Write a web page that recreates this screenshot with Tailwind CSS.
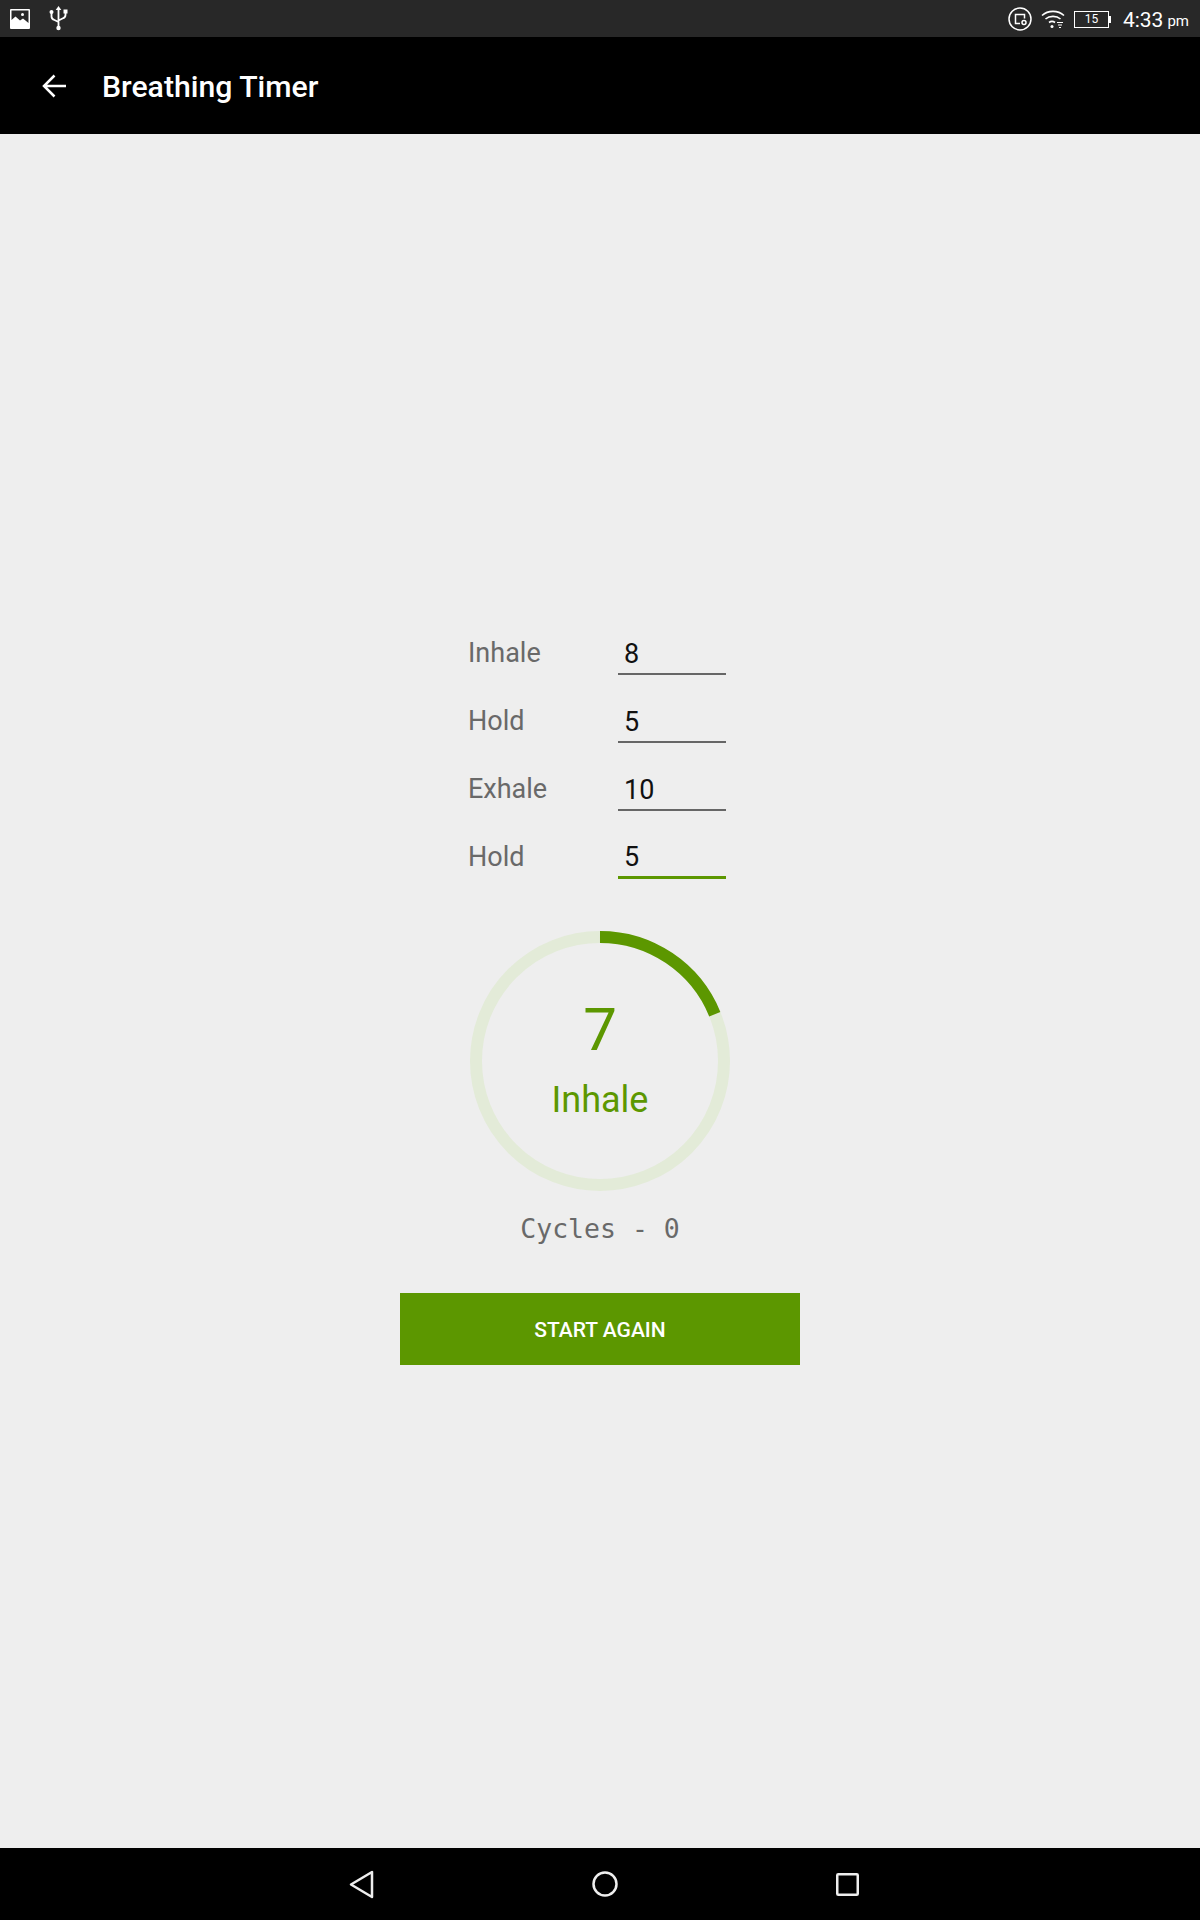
<!DOCTYPE html>
<html lang="en">
<head>
<meta charset="utf-8">
<title>Breathing Timer</title>
<script src="https://cdn.jsdelivr.net/npm/@tailwindcss/browser@4"></script>
</head>
<body class="font-['Roboto',sans-serif]">
<div class="flex flex-col w-[1200px] h-[1920px] bg-[#eeeeee]">

  <!-- Status bar -->
  <div class="flex items-center justify-between h-[37px] bg-[#282828] text-white">
    <div class="flex items-center pl-[10px] gap-[19px]">
      <svg class="w-[20px] h-[20px]" viewBox="0 0 20 20">
        <path fill="#fff" fill-rule="evenodd" d="M1 0h18a1 1 0 0 1 1 1v18a1 1 0 0 1-1 1H1a1 1 0 0 1-1-1V1a1 1 0 0 1 1-1zM1.5 1.5v9.5l4-3.5 4.5 4 3-2 5.500 4.500V1.500z"/>
        <circle cx="12.500" cy="5.500" r="1.500" fill="#fff"/>
      </svg>
      <svg class="w-[19px] h-[25px]" viewBox="0 0 19 25" fill="none" stroke="#fff" stroke-width="1.800">
        <path d="M9.500 2v20M2.500 7v3.500c0 2 1.500 3 3 3.500l4 2M16.500 6v3c0 2-1.500 3-3 3.500l-4 2"/>
        <path fill="#fff" stroke="none" d="M9.500 0l2.800 4H6.700z"/>
        <circle cx="9.500" cy="22" r="2.200" fill="#fff" stroke="none"/>
        <circle cx="2.500" cy="6" r="2" fill="#fff" stroke="none"/>
        <rect x="14.500" y="3.500" width="4" height="4" fill="#fff" stroke="none"/>
      </svg>
    </div>
    <div class="flex items-center pr-[11px]">
      <svg class="w-[24px] h-[24px] mr-[9px]" viewBox="0 0 24 24" fill="none" stroke="#fff">
        <circle cx="12" cy="12" r="11" stroke-width="1.500"/>
        <path stroke-width="1.500" d="M12 16.500H7.500v-9h9v4"/>
        <circle cx="16" cy="15.500" r="2" stroke-width="1.500"/>
      </svg>
      <svg class="w-[24px] h-[20px] mr-[9px]" viewBox="0 0 24 20" fill="none" stroke="#fff" stroke-width="1.600">
        <path d="M1 6.500c6-5.500 16-5.500 22 0"/>
        <path d="M4.500 10c4-3.500 11-3.500 15 0"/>
        <path d="M8 13.500c2-1.500 4-1.500 6 0"/>
        <circle cx="11" cy="17.500" r="1.500" fill="#fff" stroke="none"/>
        <path stroke-width="1.200" d="M16 13.500h6M17 16h4M18 18.500h2"/>
      </svg>
      <div class="flex items-center mt-[1px] mr-[12px]">
        <div class="flex items-center justify-center w-[35px] h-[17px] border border-white text-[12px] leading-none">15</div>
        <div class="w-[2px] h-[7px] bg-white"></div>
      </div>
      <span class="mt-[3px] text-[21px] leading-none mr-[4px]">4:33</span>
      <span class="mt-[6px] text-[15px] leading-none">pm</span>
    </div>
  </div>

  <!-- Toolbar -->
  <div class="flex items-center h-[97px] bg-black text-white">
    <svg class="w-[24px] h-[24px] ml-[42px] mr-[36px]" viewBox="0 0 24 24" fill="none" stroke="#fff" stroke-width="2.500">
      <path d="M24 12H2M12.500 1.500L2 12l10.500 10.500"/>
    </svg>
    <h1 class="pt-[3px] text-[30.200px] font-medium leading-none">Breathing Timer</h1>
  </div>

  <!-- Content -->
  <main class="flex-1 flex flex-col items-center pt-[473px]">
    <div class="flex flex-col w-[258px]">
      <label class="flex items-end h-[68px]">
        <span class="w-[150px] pb-[4px] text-[27px] leading-[36px] text-[#696969] ml-[-3px]">Inhale</span>
        <input class="w-[108px] h-[48px] pt-[7px] pl-[6px] text-[27px] text-[#111111] border-b-2 border-[#666666] outline-none" value="8">
      </label>
      <label class="flex items-end h-[68px]">
        <span class="w-[150px] pb-[4px] text-[27px] leading-[36px] text-[#696969] ml-[-3px]">Hold</span>
        <input class="w-[108px] h-[48px] pt-[7px] pl-[6px] text-[27px] text-[#111111] border-b-2 border-[#666666] outline-none" value="5">
      </label>
      <label class="flex items-end h-[68px]">
        <span class="w-[150px] pb-[4px] text-[27px] leading-[36px] text-[#696969] ml-[-3px]">Exhale</span>
        <input class="w-[108px] h-[48px] pt-[7px] pl-[6px] text-[27px] text-[#111111] border-b-2 border-[#666666] outline-none" value="10">
      </label>
      <label class="flex items-end h-[68px]">
        <span class="w-[150px] pb-[4px] text-[27px] leading-[36px] text-[#696969] ml-[-3px]">Hold</span>
        <input class="w-[108px] h-[48px] pt-[7px] pl-[6px] text-[27px] text-[#111111] border-b-[3px] border-[#5c9700] outline-none" value="5">
      </label>
    </div>

    <!-- Progress ring -->
    <div class="grid mt-[52px] w-[260px] h-[260px]">
      <svg class="[grid-area:1/1] w-[260px] h-[260px]" viewBox="0 0 260 260" fill="none" stroke-width="12">
        <circle cx="130" cy="130" r="124" stroke="#e3ebd8"/>
        <path stroke="#5c9700" d="M130 6A124 124 0 0 1 244.800 83.200"/>
      </svg>
      <div class="[grid-area:1/1] flex flex-col items-center text-[#5c9700]">
        <span class="mt-[64px] text-[60px] leading-[70px]">7</span>
        <span class="mt-[13px] text-[36px] leading-[44px]">Inhale</span>
      </div>
    </div>

    <p class="mt-[20px] font-['DejaVu_Sans_Mono',monospace] text-[26.500px] leading-[36px] text-[#696969]">Cycles - 0</p>

    <button class="mt-[46px] w-[400px] h-[72px] pt-[3px] bg-[#5c9700] text-white text-[21px] font-medium">START AGAIN</button>
  </main>

  <!-- Navigation bar -->
  <div class="flex items-center justify-center h-[72px] pl-[8px] bg-black">
    <svg class="w-[25px] h-[29px]" viewBox="0 0 25 29" fill="none" stroke="#eeeeee" stroke-width="2.500" stroke-linejoin="round">
      <path d="M23 2v25L2 14.500z"/>
    </svg>
    <svg class="w-[26px] h-[26px] ml-[218px]" viewBox="0 0 26 26" fill="none" stroke="#eeeeee" stroke-width="2.500">
      <circle cx="13" cy="13" r="11.500"/>
    </svg>
    <svg class="w-[23px] h-[23px] ml-[218px]" viewBox="0 0 23 23" fill="none" stroke="#eeeeee" stroke-width="2.500">
      <rect x="1.250" y="1.250" width="20.500" height="20.500" rx="1"/>
    </svg>
  </div>
</div>
</body>
</html>
